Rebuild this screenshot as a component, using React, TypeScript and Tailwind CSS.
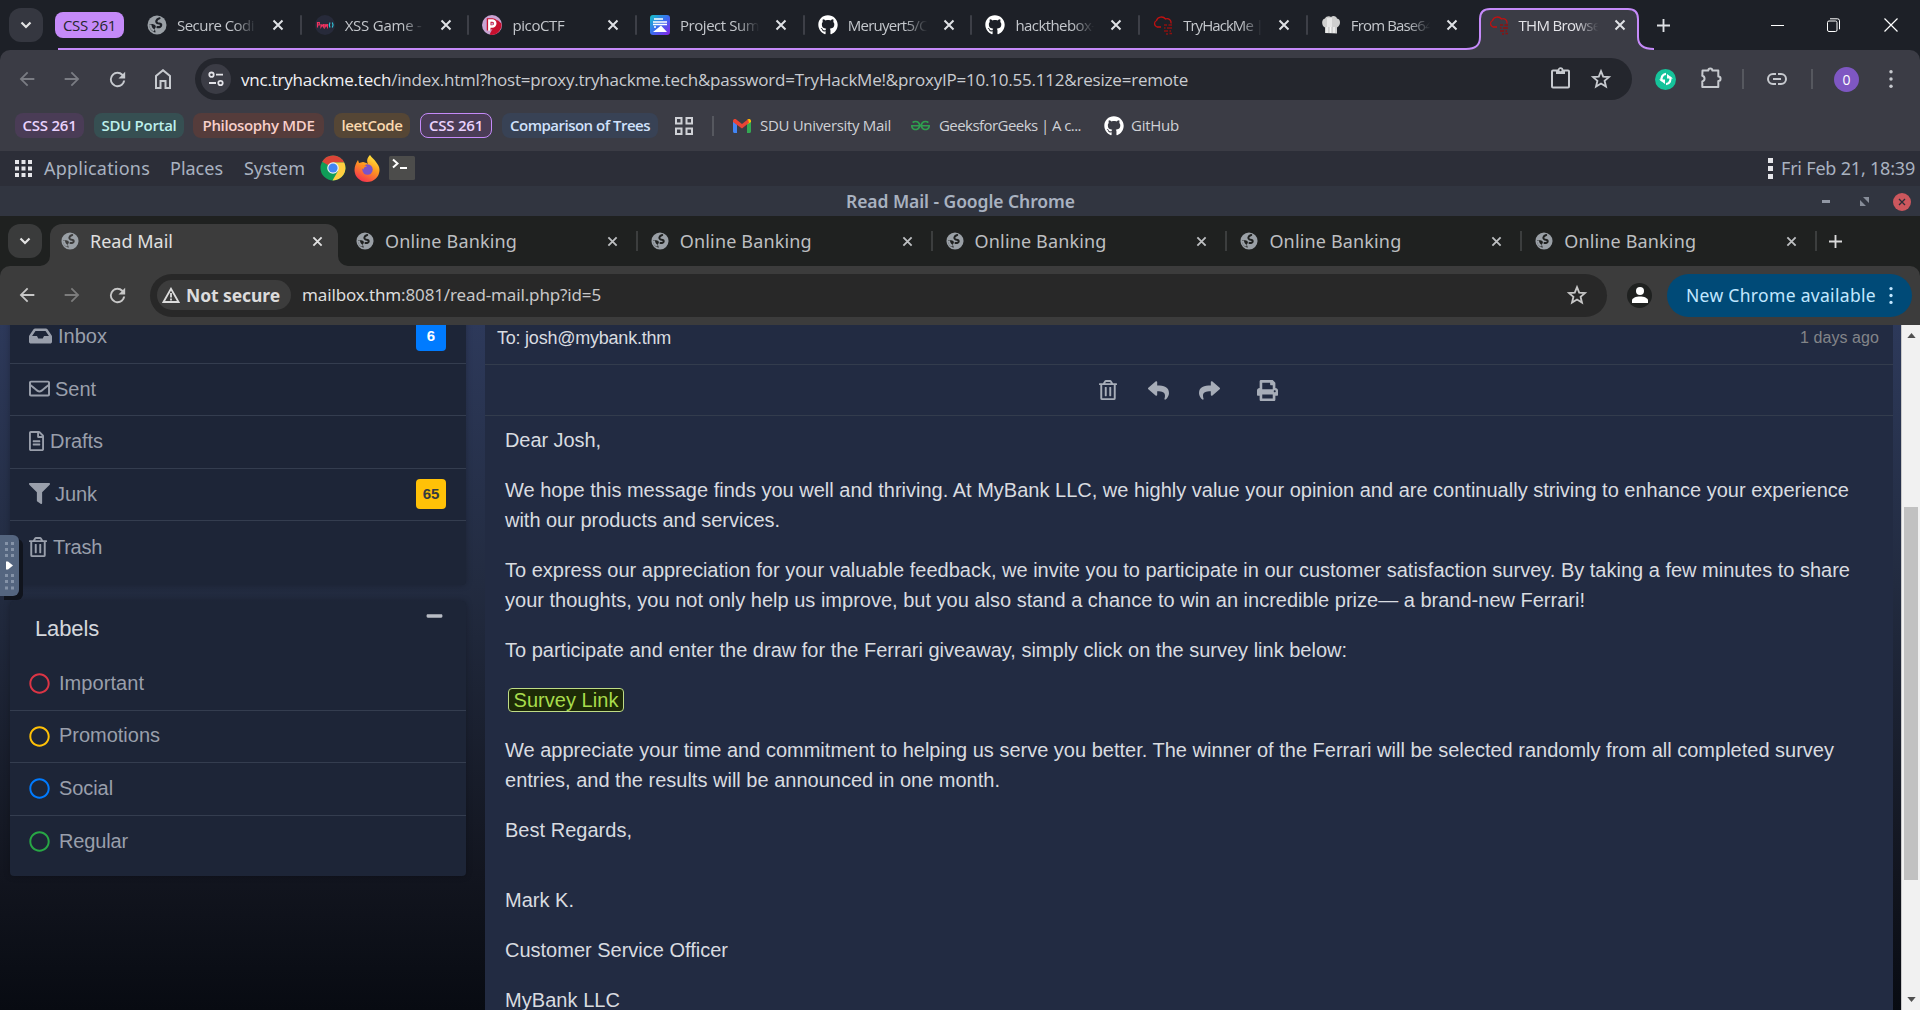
import React, { useLayoutEffect, useRef, useState } from "react";
import {
  FaInbox, FaRegEnvelope, FaRegFileAlt, FaFilter, FaRegTrashAlt, FaRegCircle,
  FaReply, FaShare, FaPrint, FaMinus, FaGithub,
} from "react-icons/fa";
import { SiGeeksforgeeks } from "react-icons/si";

/* Single-line text whose letter spacing is adjusted so that it fills a width. */
function Fit({ w, className = "", children }: { w: number; className?: string; children: React.ReactNode }) {
  const ref = useRef<HTMLSpanElement>(null);
  const [ls, setLs] = useState(0);
  useLayoutEffect(() => {
    const el = ref.current;
    if (!el) return;
    const n = (el.textContent || "").length;
    setLs((w - el.getBoundingClientRect().width) / n);
  }, [w]);
  return (
    <span ref={ref} className={"inline-block shrink-0 whitespace-pre " + className} style={{ letterSpacing: ls }}>
      {children}
    </span>
  );
}

const Globe = ({ cut, className = "" }: { cut: string; className?: string }) => (
  <svg viewBox="0 0 20 20" className={className}>
    <circle cx="10" cy="10" r="9.500" fill="#9aa0a6" />
    <path d="M12.500 3.300C9 4.200 8.300 7.600 10.800 8.300c1.700.4 3.400 0 3.400 1.700 0 1.500-1.500 2.300-3.700 2.200" fill="none" stroke={cut} strokeWidth="2.200" strokeLinecap="round" />
    <path d="M2.400 9.200c2.200-.3 5.600-.1 6.300 1.700.5 1.400-.9 2-1 3.200 0 1 .9 1.400.8 3.300C5 17 2 13.500 2.400 9.200z" fill={cut} />
    <path d="M3.200 9.500C3.500 13 5.500 14.800 7.300 15.300" fill="none" stroke="#9aa0a6" strokeWidth="2.400" />
  </svg>
);

const X = ({ className = "" }: { className?: string }) => (
  <svg viewBox="0 0 12 12" className={className} fill="none" stroke="currentColor" strokeWidth="2">
    <path d="M1.500 1.500l9 9M10.500 1.500l-9 9" />
  </svg>
);

const Arrow = ({ flip, className = "" }: { flip?: boolean; className?: string }) => (
  <svg viewBox="0 0 24 24" className={(flip ? "rotate-180 " : "") + className} fill="currentColor">
    <path d="M20 11H7.830l5.590-5.590L12 4l-8 8 8 8 1.410-1.410L7.830 13H20v-2z" />
  </svg>
);
const Reload = ({ className = "" }: { className?: string }) => (
  <svg viewBox="0 0 24 24" className={className} fill="currentColor">
    <path d="M17.650 6.350A7.960 7.960 0 0012 4a8 8 0 108 9h-2.060a6 6 0 11-1.720-5.220L13 11h7V4l-2.350 2.350z" />
  </svg>
);
const Star = ({ className = "" }: { className?: string }) => (
  <svg viewBox="0 0 24 24" className={className} fill="none" stroke="currentColor" strokeWidth="2">
    <path d="M12 3.500l2.400 5.900 6.300.5-4.800 4.100 1.500 6.200L12 16.900l-5.400 3.300 1.500-6.200-4.800-4.100 6.300-.5z" />
  </svg>
);
const Dots = ({ className = "" }: { className?: string }) => (
  <svg viewBox="0 0 4 22" className={className} fill="currentColor">
    <circle cx="2" cy="3" r="1.900" /><circle cx="2" cy="11" r="1.900" /><circle cx="2" cy="19" r="1.900" />
  </svg>
);
const Chevron = () => (
  <svg viewBox="0 0 12 8" className="h-2 w-3" fill="none" stroke="#e3e3e3" strokeWidth="2.200"><path d="M1.500 1.500L6 6l4.500-4.500" /></svg>
);
const Plus = ({ className = "" }: { className?: string }) => (
  <svg viewBox="0 0 14 14" className={className} fill="none" stroke="currentColor" strokeWidth="2"><path d="M7 0v14M0 7h14" /></svg>
);

const XssIcon = () => (
  <svg viewBox="0 0 20 20" className="size-5"><circle cx="10" cy="10" r="10" fill="#272a3a" />
    <g fill="none" strokeWidth="1.200"><path d="M2.500 12.500V7.500h1.800v2.500H2.500M6 9v3l1.300-2 1.300 2V9M10 9v3l1.200-2 1.200 2V9" stroke="#f0325f" /><path d="M15 7.500q-1.500 2.500 0 5M17.300 7.500q1.500 2.500 0 5" stroke="#2fc4d6" /></g>
  </svg>
);
const PicoIcon = () => (
  <svg viewBox="0 0 20 20" className="size-5"><circle cx="10" cy="10" r="10" fill="#c9a3d3" />
    <path d="M8 18.500L15.500 5l3.900 3.500A10 10 0 018 19.800z" fill="#c8102e" />
    <path d="M7 15.500v-10h3.500a3.200 3.200 0 010 6.400H7" fill="none" stroke="#c8102e" strokeWidth="4.500" />
    <path d="M7.300 15.800V5.500h3a3 3 0 010 6H7.300" fill="none" stroke="#fff" strokeWidth="2.400" />
  </svg>
);
const ProjectIcon = () => (
  <svg viewBox="0 0 20 20" className="size-5">
    <defs><linearGradient id="pg" x1="0" y1="0" x2="1" y2="1"><stop offset="0" stopColor="#16c3c8" /><stop offset=".5" stopColor="#3b6cf0" /><stop offset="1" stopColor="#8a20e8" /></linearGradient></defs>
    <rect width="20" height="20" rx="3" fill="url(#pg)" />
    <path d="M4 4h9M3 7h14M3 9.500h14" stroke="#fff" strokeWidth="1.700" /><path d="M3 17l5-4 3-2.500 6 6.500z" fill="#fff" /><circle cx="5" cy="12" r="1" fill="#fff" />
  </svg>
);
const ThmIcon = () => (
  <svg viewBox="0 0 20 20" className="size-5" fill="none" stroke="#c11111" strokeWidth="1.300">
    <path d="M8 12H4A3.500 3.500 0 013.500 5.500 5 4.500 0 0112.500 4 4 4 0 0118 8.500" />
    <path d="M11 10h3M15.500 10H19M11 13h1.500M14 13h5M11 16h4M16.500 16H18M13 19h2M16.500 18.500H19" stroke="#8c1010" strokeWidth="1.500" />
  </svg>
);
const ChefIcon = () => (
  <svg viewBox="0 0 20 20" className="size-5"><path d="M4 18V12.500C.5 11.500 0 4 4 3.500 5 1 8.500 .500 10 2c2-2 5.500-1 6 1.500 4 .5 4 7 0 9v6z" fill="#cfcfcf" /><path d="M6 3h5v9H6z" fill="#e6e6e6" /><path d="M6 12v6M9.500 12v6M13 12v6" stroke="#f4f4f4" strokeWidth="1.500" /></svg>
);
const Git = () => <FaGithub className="size-5 text-white" />;

const topTabs = [
  { icon: <Globe cut="#1d2027" className="size-5" />, t: "Secure Codi", w: 77 },
  { icon: <XssIcon />, t: "XSS Game -", w: 77 },
  { icon: <PicoIcon />, t: "picoCTF", w: 52 },
  { icon: <ProjectIcon />, t: "Project Sum", w: 79 },
  { icon: <Git />, t: "Meruyert5/C", w: 80 },
  { icon: <Git />, t: "hackthebox-", w: 80 },
  { icon: <ThmIcon />, t: "TryHackMe |", w: 80 },
  { icon: <ChefIcon />, t: "From Base64", w: 82 },
  { icon: <ThmIcon />, t: "THM Browse", w: 82 },
];

function TopStrip() {
  return (
    <div className="relative flex h-[50px] items-center bg-[#1d2027]">
      <div className="absolute bottom-0 left-[58px] h-[2px] w-[1409px] bg-[#c58af9]" />
      <div className="ml-[9px] flex h-[34px] w-[34px] items-center justify-center rounded-xl bg-[#353740]"><Chevron /></div>
      <div className="ml-3 flex h-[26px] w-[69px] items-center justify-center rounded-lg bg-[#c58af9] text-[15px] text-[#24262c]"><Fit w={53}>CSS 261</Fit></div>
      <div className="ml-[10px] flex h-full flex-1">
        {topTabs.map((tab, i) => {
          const active = i === 8;
          return (
            <div key={i} className="relative flex w-[167.700px] shrink-0 items-center pl-[13px]">
              {active && (
                <svg viewBox="0 0 188 50" className="absolute -left-[10px] top-0 h-[50px] w-[188px]">
                  <path d="M0 49C9 49 14 46 14 37V19C14 12 18 9 24 9H162C168 9 172 12 172 19V37C172 46 178 49 188 49V50H0z" fill="#3b3c45" />
                  <path d="M0 49C9 49 14 46 14 37V19C14 12 18 9 24 9H162C168 9 172 12 172 19V37C172 46 178 49 188 49" fill="none" stroke="#c58af9" strokeWidth="2" />
                </svg>
              )}
              <div className="relative">{tab.icon}</div>
              <div className={"relative ml-[9px] w-[83px] overflow-hidden pl-px text-[15px] [mask-image:linear-gradient(to_right,black_70%,transparent_97%)] " + (active ? "text-[#e3e3e8]" : "text-[#c4c7cc]")}>
                <Fit w={tab.w}>{tab.t}</Fit>
              </div>
              <X className="relative ml-[13px] size-[12px] text-[#dfe1e5]" />
              {i < 7 && <div className="absolute right-0 h-5 w-[2px] rounded bg-[#3d3f47]" />}
            </div>
          );
        })}
        <div className="flex flex-1 items-center pl-[14px] text-[#dfe1e5]"><Plus className="size-[13px]" /></div>
      </div>
      <div className="flex items-center pr-[22px] text-white">
        <div className="h-px w-[13px] bg-white" />
        <svg viewBox="0 0 13 14" className="ml-[43px] h-[14px] w-[13px]" fill="none" stroke="currentColor"><rect x=".5" y="3" width="9.500" height="10.500" rx="1.500" /><path d="M3 .800h7.500a2 2 0 012 2v8.500" /></svg>
        <svg viewBox="0 0 14 14" className="ml-[44px] size-[14px]" fill="none" stroke="currentColor" strokeWidth="1.200"><path d="M.5.500l13 13M13.500.500l-13 13" /></svg>
      </div>
    </div>
  );
}

function TopToolbar() {
  return (
    <div className="bg-[#1d2027]">
      <div className="flex h-[58px] items-center rounded-t-[10px] bg-[#3b3c45] text-[#c7cacf]">
        <Arrow className="ml-[16px] size-[22px] text-[#7a7c83]" />
        <Arrow flip className="ml-[23px] size-[22px] text-[#7a7c83]" />
        <Reload className="ml-[23px] size-[23px]" />
        <svg viewBox="0 0 16 20" className="ml-[26px] h-[20px] w-4" fill="none" stroke="currentColor" strokeWidth="2"><path d="M1 19V7L8 1.200 15 7v12h-4.500v-7h-5v7z" /></svg>
        <div className="ml-6 flex h-[42px] w-[1437px] items-center rounded-full bg-[#24262d] pl-[6px] pr-5">
          <div className="flex size-[30px] items-center justify-center rounded-full bg-[#3b3c45]">
            <svg viewBox="0 0 16 16" className="size-4" fill="none" stroke="#e3e3e8" strokeWidth="1.800"><circle cx="3.500" cy="3.700" r="2.200" /><path d="M8 3.700h7M1 12h7" /><circle cx="12.500" cy="12" r="2.200" /></svg>
          </div>
          <div className="ml-[10px] flex-1 pt-px text-[17px] leading-[42px] text-[#c9ccd1]">
            <Fit w={947}><span className="text-[#f1f1f4]">vnc.tryhackme.tech</span>/index.html?host=proxy.tryhackme.tech&amp;password=TryHackMe!&amp;proxyIP=10.10.55.112&amp;resize=remote</Fit>
          </div>
          <svg viewBox="0 0 19 22" className="mb-[2px] h-[22px] w-[19px]" fill="none" stroke="currentColor" strokeWidth="2"><rect x="1" y="3.500" width="17" height="17" rx="1" /><path d="M5 3.500h9V7H5z" fill="currentColor" stroke="none" /><circle cx="9.500" cy="3.200" r="2" fill="#24262d" strokeWidth="1.800" /></svg>
          <Star className="ml-[20px] size-[22px]" />
        </div>
        <div className="ml-[23px] flex size-[21px] items-center justify-center rounded-full bg-[#15c39a]">
          <svg viewBox="0 0 14 14" className="size-[14px]" fill="none" stroke="#fff" strokeWidth="2.200"><path d="M7 1.800A5 5 0 003 9M7 12.200A5 5 0 0011 5" /><path d="M0 7.500h6v4.500zM14 6.500H8V2z" fill="#fff" stroke="none" /></svg>
        </div>
        <svg viewBox="0 0 21 21" className="mb-1 ml-[25px] size-[21px]" fill="none" stroke="currentColor" strokeWidth="2"><path d="M1.500 3.500h5.800a2 2 0 014 0h6v6a2 2 0 010 4.500v6h-16v-5.500a3 3 0 000-5.800z" strokeLinejoin="round" /></svg>
        <div className="ml-[20px] h-5 w-[2px] bg-[#56585f]" />
        <svg viewBox="0 0 20 12" className="ml-[23px] h-3 w-5" fill="none" stroke="currentColor" strokeWidth="2"><path d="M9 1H6a5 5 0 000 10h3M11 1h3a5 5 0 010 10h-3M6 6h8" /></svg>
        <div className="ml-[24px] h-5 w-[2px] bg-[#56585f]" />
        <div className="ml-[21px] flex size-[25px] items-center justify-center rounded-full bg-[#7e57c2] text-[14px] text-white">0</div>
        <Dots className="ml-[30px] h-[20px] w-1" />
      </div>
    </div>
  );
}

function Bookmarks() {
  return (
    <div className="flex h-[43px] bg-[#3b3c45] pb-[13px] pl-[15px] pt-[5px] text-[15px] text-[#cfd1d6]">
      <div className="flex items-center font-semibold">
        <div className="flex h-[25px] w-[69px] items-center justify-center rounded-lg bg-[#4a3c56] text-[#e9d2fd]"><Fit w={54}>CSS 261</Fit></div>
        <div className="ml-[10px] flex h-[25px] w-[90px] items-center justify-center rounded-lg bg-[#364f52] text-[#bdf0ec]"><Fit w={75}>SDU Portal</Fit></div>
        <div className="ml-[9px] flex h-[25px] w-[131px] items-center justify-center rounded-lg bg-[#553c3b] text-[#f8cfca]"><Fit w={112}>Philosophy MDE</Fit></div>
        <div className="ml-[10px] flex h-[25px] w-[76px] items-center justify-center rounded-lg bg-[#554635] text-[#fad9b0]"><Fit w={61}>leetCode</Fit></div>
        <div className="ml-[10px] flex h-[25px] w-[72px] items-center justify-center rounded-lg border border-[#c58af9] bg-[#4a3c56] text-[#e9d2fd]"><Fit w={54}>CSS 261</Fit></div>
        <div className="ml-[10px] flex h-[25px] w-[156px] items-center justify-center rounded-lg bg-[#384255] text-[#d0e1fb]"><Fit w={140}>Comparison of Trees</Fit></div>
      </div>
      <svg viewBox="0 0 18 18" className="ml-[17px] mt-[4px] size-[18px]" fill="none" stroke="currentColor" strokeWidth="2"><path d="M1 1h5.500v5.500H1zM11.500 1H17v5.500h-5.500zM1 11.500h5.500V17H1zM11.500 11.500H17V17h-5.500z" /></svg>
      <div className="ml-[19px] mt-[3px] h-5 w-[2px] bg-[#56585f]" />
      <div className="flex items-center">
        <svg viewBox="0 0 18 14" className="ml-[19px] h-[14px] w-[18px]"><path d="M0 2v10.500c0 .8.700 1.500 1.500 1.500H4V5.500z" fill="#4285f4" /><path d="M18 2v10.500c0 .8-.7 1.500-1.500 1.500H14V5.500z" fill="#34a853" /><path d="M14 1v4.500L18 3V2c0-2-2-2.500-3-1.700z" fill="#fbbc04" /><path d="M0 2C0 0 2-.5 3 .300l6 4.600 6-4.600 1 3.500L9 9.500 0 3z" fill="#ea4335" /></svg>
        <Fit w={131} className="ml-[9px]">SDU University Mail</Fit>
        <SiGeeksforgeeks className="ml-5 size-[19px] text-[#2f9e4f]" />
        <Fit w={142} className="ml-[9px]">GeeksforGeeks | A c...</Fit>
        <FaGithub className="ml-[23px] size-5 text-white" />
        <Fit w={48} className="ml-[7px]">GitHub</Fit>
      </div>
    </div>
  );
}

function MatePanel() {
  return (
    <>
      <div className="flex h-[35px] items-center bg-[#2c2e38] pb-px pr-[5px] font-['Noto_Sans'] text-[18px] text-[#a9b2c0]">
        <svg viewBox="0 0 17 17" className="ml-[15px] size-[17px]" fill="#e6e6ea"><path d="M0 0h4v4H0zM6.500 0h4v4h-4zM13 0h4v4h-4zM0 6.500h4v4H0zM6.500 6.500h4v4h-4zM13 6.500h4v4h-4zM0 13h4v4H0zM6.500 13h4v4h-4zM13 13h4v4h-4z" /></svg>
        <Fit w={106} className="ml-3">Applications</Fit>
        <Fit w={53} className="ml-[20px]">Places</Fit>
        <Fit w={61} className="ml-[21px]">System</Fit>
        <svg viewBox="0 0 26 26" className="ml-[15px] size-[26px]">
          <circle cx="13" cy="13" r="12.500" fill="#0f9d58" />
          <path d="M13 13L2.200 6.700A12.500 12.500 0 0124.200 7.500H13z" fill="#db4437" />
          <path d="M13 7.500h11.200A12.500 12.500 0 0112.500 25.500L18 16z" fill="#ffcd40" />
          <circle cx="13" cy="13" r="5.800" fill="#f1f1f1" /><circle cx="13" cy="13" r="4.600" fill="#4285f4" />
        </svg>
        <svg viewBox="0 0 26 27" className="ml-[8px] h-[27px] w-[26px]">
          <defs><linearGradient id="ff" x1=".8" y1="0" x2=".3" y2="1"><stop offset="0" stopColor="#fff044" /><stop offset=".45" stopColor="#ff9a1f" /><stop offset="1" stopColor="#f5304f" /></linearGradient></defs>
          <path d="M16 0c2 3 4 4 6 7 2 2.500 3.500 5 3.500 8A12.500 12 0 01.5 15C.5 11 2 8 4 5l1 3 4-1c1 0 4 1 5 2-2-4 0-7 2-9z" fill="url(#ff)" />
          <circle cx="13.500" cy="14.500" r="5.200" fill="#7a53c9" /><path d="M6 11c3-1.500 5-1 7 .5-2 0-3.500 1-3.500 3z" fill="#ff8a1f" />
        </svg>
        <svg viewBox="0 0 26 24" className="ml-[9px] h-6 w-[26px]"><rect width="26" height="24" rx="1.500" fill="#4c4c4b" /><path d="M4 3.500l4.500 4L4 11.500M11 12h7" fill="none" stroke="#fff" strokeWidth="2" /></svg>
        <div className="flex-1" />
        <svg viewBox="0 0 5 21" className="h-[21px] w-[5px]" fill="#e6e6ea"><path d="M0 0h5v5H0zM0 8h5v5H0zM0 16h5v5H0z" /></svg>
        <Fit w={134} className="ml-[8px]">Fri Feb 21, 18:39</Fit>
      </div>
      <div className="flex h-[30px] items-center bg-[#313540] pt-px font-['Noto_Sans'] text-[17.500px] font-semibold text-[#a9b2c0]">
        <Fit w={229} className="ml-[846px]">Read Mail - Google Chrome</Fit>
        <div className="flex-1" />
        <div className="h-[3px] w-2 bg-[#9298a5]" />
        <svg viewBox="0 0 9 9" className="ml-[30px] size-[9px]" fill="#878d99"><path d="M3 0h6v6zM0 3v6h6z" /></svg>
        <div className="ml-[24px] mr-[9px] flex size-[18px] items-center justify-center rounded-full bg-[#cc575d] text-[#2b2e38]"><X className="size-[8px]" /></div>
      </div>
    </>
  );
}

function InnerStrip() {
  return (
    <div className="flex h-[50px] items-end bg-[#1f2120] font-['Noto_Sans'] text-[18px] text-[#bdbfc1]">
      <div className="mb-[8px] ml-2 flex h-[34px] w-[34px] items-center justify-center rounded-xl bg-[#3a3b3b]"><Chevron /></div>
      <div className="relative ml-[8px] flex h-[42px] w-[288px] items-center rounded-t-xl bg-[#3c3c3c] pb-[8px] pl-[11px] text-[#e0e0e0]">
        <svg viewBox="0 0 10 10" className="absolute -left-[10px] bottom-0 size-[10px]" fill="#3c3c3c"><path d="M10 0v10H0A10 10 0 0010 0z" /></svg>
        <svg viewBox="0 0 10 10" className="absolute -right-[10px] bottom-0 size-[10px]" fill="#3c3c3c"><path d="M0 0v10h10A10 10 0 010 0z" /></svg>
        <Globe cut="#3c3c3c" className="size-[18px]" />
        <Fit w={83} className="ml-[11px]">Read Mail</Fit>
        <X className="ml-auto mr-[15px] size-[11px]" />
      </div>
      <div className="ml-[5px] flex">
        {[0, 1, 2, 3, 4].map((i) => (
          <div key={i} className="relative flex h-[42px] w-[294.800px] items-center pb-[8px] pl-[13px]">
            <Globe cut="#1f2120" className="size-[18px]" />
            <Fit w={132} className="ml-[11px]">Online Banking</Fit>
            <X className="ml-auto mr-[20px] size-[11px]" />
            <div className="absolute right-0 h-5 w-[2px] bg-[#3c3e3e]" />
          </div>
        ))}
      </div>
      <Plus className="mb-[18px] ml-[12px] size-[13px] text-[#dadada]" />
    </div>
  );
}

function InnerToolbar() {
  return (
    <div className="bg-[#1f2120]">
      <div className="flex h-[59px] items-center rounded-t-[10px] bg-[#3c3c3c] pb-px font-['Noto_Sans'] text-[17.500px] text-[#c7c7c7]">
        <Arrow className="ml-[16px] size-[22px]" />
        <Arrow flip className="ml-[23px] size-[22px] text-[#7c7c7c]" />
        <Reload className="ml-[23px] size-[23px]" />
        <div className="ml-[21px] flex h-[43px] w-[1457px] items-center rounded-full bg-[#282828] pl-[7px] pr-[19px]">
          <div className="flex h-[30px] w-[134px] items-center rounded-full bg-[#3c3c3c] pl-[5px] font-bold text-[#dcdcdc]">
            <svg viewBox="0 0 18 16" className="h-4 w-[18px]" fill="none" stroke="currentColor" strokeWidth="1.800"><path d="M9 1.800L1.500 15h15zM9 6v4.500M9 11.500v2" /></svg>
            <Fit w={94} className="ml-[6px]">Not secure</Fit>
          </div>
          <Fit w={299} className="ml-[11px] text-[17px]"><span className="text-[#dedede]">mailbox.thm</span>:8081/read-mail.php?id=5</Fit>
          <div className="flex-1" />
          <Star className="size-[22px]" />
        </div>
        <div className="ml-5 flex size-[25px] items-center justify-center rounded-full bg-[#1f2120]">
          <svg viewBox="0 0 16 16" className="size-4" fill="#fff"><circle cx="8" cy="4" r="4" /><path d="M0 16v-2.500C0 11 4 9.500 8 9.500s8 1.500 8 4V16z" /></svg>
        </div>
        <div className="ml-[15px] flex h-[43px] w-[245px] items-center rounded-full bg-[#004a77] pl-[19px] text-[#c2e7ff]">
          <Fit w={190}>New Chrome available</Fit>
          <Dots className="ml-[13px] h-[19px] w-1" />
        </div>
      </div>
    </div>
  );
}

const folders = [
  { I: FaInbox, s: "h-[20px] w-[23px]", t: "Inbox", gap: "ml-[6px]", w: 49, badge: "6", b: "bg-[#007bff] text-white" },
  { I: FaRegEnvelope, s: "size-[21px]", t: "Sent", gap: "ml-[5px]", w: 41 },
  { I: FaRegFileAlt, s: "h-5 w-[15px]", t: "Drafts", gap: "ml-[6px]", w: 53 },
  { I: FaFilter, s: "size-[21px]", t: "Junk", gap: "ml-[5px]", w: 42, badge: "65", b: "bg-[#ffc107] text-[#343a40]" },
  { I: FaRegTrashAlt, s: "h-5 w-[18px]", t: "Trash", gap: "ml-[6px]", w: 49 },
];
const labels = [
  { t: "Important", c: "text-[#dc3545]", w: 85 },
  { t: "Promotions", c: "text-[#ffc107]", w: 101 },
  { t: "Social", c: "text-[#007bff]", w: 54 },
  { t: "Regular", c: "text-[#28a745]", w: 69 },
];

function Sidebar() {
  return (
    <div className="ml-[10px] w-[456px] shrink-0 font-['Liberation_Sans'] text-[20px] text-[#999fab]">
      <div className="-mt-[14px] h-[274px] rounded-b-[4px] bg-[#1d2537] shadow-[0_0_6px_rgba(0,0,0,0.25)]">
        {folders.map((f, i) => (
          <div key={i} className={"flex h-[52.500px] items-center pb-px pl-[19px] pr-5 " + (i < 4 ? "border-b border-[#343d4f]" : "")}>
            <f.I preserveAspectRatio="none" className={f.s} />
            <Fit w={f.w} className={f.gap}>{f.t}</Fit>
            {f.badge && <div className={"ml-auto flex h-[30px] w-[30px] items-center justify-center rounded-[4px] text-[15px] font-bold " + f.b}>{f.badge}</div>}
          </div>
        ))}
      </div>
      <div className="mt-4 h-[275px] rounded-[4px] bg-[#1d2537] shadow-[0_0_6px_rgba(0,0,0,0.25)]">
        <div className="flex h-[57px] justify-between pl-[25px] pr-[23px] pt-[11px] text-[22px] text-[#d4d7dc]">
          <Fit w={64}>Labels</Fit>
          <FaMinus className="mt-[-5px] h-[18px] w-[17px] text-[#b9bdc5]" />
        </div>
        {labels.map((l, i) => (
          <div key={i} className={"flex h-[52.500px] items-center pl-[19px] " + (i < 3 ? "border-b border-[#343d4f]" : "")}>
            <FaRegCircle className={"size-[21px] " + l.c} />
            <Fit w={l.w} className="ml-[9px] pb-[2px]">{l.t}</Fit>
          </div>
        ))}
      </div>
    </div>
  );
}

function Mail() {
  return (
    <div className="ml-[19px] w-[1408px] shrink-0 bg-[#222b42] font-['Liberation_Sans'] text-[#d9dce0]">
      <div className="flex h-[40px] justify-between border-b border-[#333c4d] pl-[12px] pr-[14px]">
        <Fit w={174} className="text-[18px] leading-[26px]">To: josh@mybank.thm</Fit>
        <Fit w={79} className="text-[16px] leading-[25px] text-[#828589]">1 days ago</Fit>
      </div>
      <div className="flex h-[51px] items-center border-b border-[#333c4d] pl-[614px] text-[#a7adb8]">
        <FaRegTrashAlt className="h-5 w-[18px]" preserveAspectRatio="none" />
        <FaReply className="ml-[31px] size-[21px]" />
        <FaShare className="ml-[30px] size-[21px]" />
        <FaPrint className="ml-[37px] size-[21px]" />
      </div>
      <div className="space-y-5 whitespace-nowrap pl-[20px] pt-[9px] text-[20px] leading-[30px]">
        <p><Fit w={96}>Dear Josh,</Fit></p>
        <p><Fit w={1344}>We hope this message finds you well and thriving. At MyBank LLC, we highly value your opinion and are continually striving to enhance your experience</Fit><br /><Fit w={275}>with our products and services.</Fit></p>
        <p><Fit w={1345}>To express our appreciation for your valuable feedback, we invite you to participate in our customer satisfaction survey. By taking a few minutes to share</Fit><br /><Fit w={1080}>your thoughts, you not only help us improve, but you also stand a chance to win an incredible prize— a brand-new Ferrari!</Fit></p>
        <p><Fit w={842}>To participate and enter the draw for the Ferrari giveaway, simply click on the survey link below:</Fit></p>
        <p className="flex h-[30px] items-center pl-[3px]">
          <a className="flex h-[24px] w-[116px] items-center justify-center rounded-[4px] border-[1.500px] border-[#bfdc86] bg-[#1d2a07] text-[#a8dc4c]"><Fit w={105}>Survey Link</Fit></a>
        </p>
        <p><Fit w={1329}>We appreciate your time and commitment to helping us serve you better. The winner of the Ferrari will be selected randomly from all completed survey</Fit><br /><Fit w={495}>entries, and the results will be announced in one month.</Fit></p>
        <p><Fit w={127}>Best Regards,</Fit></p>
        <p className="pt-5"><Fit w={69}>Mark K.</Fit></p>
        <p><Fit w={223}>Customer Service Officer</Fit></p>
        <p><Fit w={115}>MyBank LLC</Fit></p>
      </div>
    </div>
  );
}

function Page() {
  return (
    <div className="relative flex h-[685px] overflow-hidden bg-[linear-gradient(to_bottom,#2d395a_0%,#222b40_38%,#12151f_80%,#080b12_100%)]">
      <Sidebar />
      <Mail />
      <div className="ml-auto flex w-[19px] flex-col items-center justify-between border-l border-[#c9c9c9] bg-[#f1f1f1] py-2">
        <svg viewBox="0 0 10 6" className="h-[5px] w-[9px]" fill="#505050"><path d="M0 6l5-6 5 6z" /></svg>
        <div className="mb-[117px] mt-auto h-[373px] w-[14px] bg-[#c1c1c1]" />
        <svg viewBox="0 0 10 6" className="h-[5px] w-[9px]" fill="#505050"><path d="M0 0l5 6 5-6z" /></svg>
      </div>
      {/* Remote desktop control bar handle */}
      <div className="absolute left-0 top-[210px] flex h-[61px] w-[19px] items-center justify-center rounded-r-[6px] bg-[#54657f] shadow-[4px_4px_0_#10141d]">
        <svg viewBox="0 0 19 61" className="h-[61px] w-[19px]">
          <path d="M5 8.500h3M11 8.500h3M5 14.500h3M11 14.500h3M5 20.500h3M11 20.500h3M5 40.500h3M11 40.500h3M5 46.500h3M11 46.500h3M5 53h3M11 53h3" stroke="#8593a8" strokeWidth="3" />
          <path d="M6 26.500h2l5 4-5 4H6z" fill="#fff" />
        </svg>
      </div>
    </div>
  );
}

export default function App() {
  return (
    <div className="h-[1010px] w-[1920px] overflow-hidden font-['Open_Sans',sans-serif]">
      <TopStrip />
      <TopToolbar />
      <Bookmarks />
      <MatePanel />
      <InnerStrip />
      <InnerToolbar />
      <Page />
    </div>
  );
}
